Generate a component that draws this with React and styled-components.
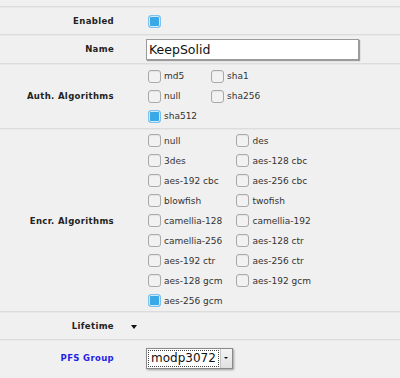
import React from "react";
import styled, { createGlobalStyle } from "styled-components";

const Global = createGlobalStyle`
  html, body { margin: 0; padding: 0; background: #f0f0f0; }
  body { font-family: "DejaVu Sans", Verdana, sans-serif; }
`;

const Page = styled.div`
  width: 400px;
  height: 378px;
  overflow: hidden;
  background: #f0f0f0;
`;

const TopSpacer = styled.div`
  height: 6px;
`;

const Row = styled.div`
  display: grid;
  grid-template-columns: 114px 32px 1fr;
  align-items: center;
  border-top: 1px solid #dcdcdc;
  box-shadow: inset 0 1px 0 #e8e8e8;
  min-height: ${(p) => p.$h || 27}px;
  box-sizing: content-box;
  padding: ${(p) => p.$pad || "0"};
`;

const Label = styled.div`
  text-align: right;
  font-weight: bold;
  font-size: 8.5px;
  color: ${(p) => (p.$link ? "#1f1fe6" : "#222")};
  letter-spacing: 0.35px;
`;

const Gap = styled.div`
  display: flex;
  align-items: center;
  padding-left: 17px;
  padding-top: ${(p) => (p.$down ? "2px" : "0")};
`;

const Value = styled.div`
  display: flex;
  align-items: center;
`;

const CheckGrid = styled.div`
  display: grid;
  grid-template-columns: auto auto;
  justify-content: start;
  column-gap: 14px;
  row-gap: 7px;
  padding-left: 2px;
`;

const CheckItem = styled.label`
  display: flex;
  align-items: center;
  height: 13px;
  font-size: 9px;
  color: #333;
  white-space: nowrap;
`;

const Box = styled.span`
  box-sizing: border-box;
  width: 13px;
  height: 13px;
  border-radius: 3px;
  margin-right: 3px;
  flex: none;
  border: 1px solid ${(p) => (p.$on ? "#7cc2ee" : "#a9a9a9")};
  background: ${(p) => (p.$on ? "#3aa8e6" : "#f2f2f2")};
  box-shadow: ${(p) =>
    p.$on ? "inset 0 0 0 1px #cfe9f9" : "inset 0 1px 1px rgba(0,0,0,0.06)"};
`;

const SingleBox = styled(Box)`
  margin-left: 2px;
  margin-top: 1px;
`;

const TextInput = styled.div`
  box-sizing: border-box;
  width: 213px;
  height: 21px;
  background: #fff;
  border: 1px solid #9a9a9a;
  box-shadow: 1px 1px 1px rgba(0, 0, 0, 0.35);
  font-size: 12.5px;
  line-height: 19px;
  padding-left: 2px;
  color: #111;
`;

const SelectBox = styled.div`
  box-sizing: border-box;
  display: flex;
  height: 21px;
  border: 1px solid #8a8a8a;
  box-shadow: 1px 1px 2px rgba(0, 0, 0, 0.35);
  background: #fff;
`;

const SelectValue = styled.div`
  font-size: 12px;
  line-height: 17px;
  color: #111;
  padding: 0 3px;
  margin: 1px;
  outline: 1px dotted #444;
  outline-offset: -1px;
`;

const SelectButton = styled.div`
  width: 11px;
  display: flex;
  align-items: center;
  justify-content: center;
  background: linear-gradient(#f4f4f4, #e0e0e0);
  border-left: 1px solid #c4c4c4;
`;

const Tri = styled.span`
  width: 0;
  height: 0;
  border-left: ${(p) => p.$s}px solid transparent;
  border-right: ${(p) => p.$s}px solid transparent;
  border-top: ${(p) => Math.round(p.$s * 1.1)}px solid #111;
`;

const auth = [
  ["md5", false],
  ["sha1", false],
  ["null", false],
  ["sha256", false],
  ["sha512", true],
];

const encr = [
  ["null", false],
  ["des", false],
  ["3des", false],
  ["aes-128 cbc", false],
  ["aes-192 cbc", false],
  ["aes-256 cbc", false],
  ["blowfish", false],
  ["twofish", false],
  ["camellia-128", false],
  ["camellia-192", false],
  ["camellia-256", false],
  ["aes-128 ctr", false],
  ["aes-192 ctr", false],
  ["aes-256 ctr", false],
  ["aes-128 gcm", false],
  ["aes-192 gcm", false],
  ["aes-256 gcm", true],
];

function Checks({ items }) {
  return (
    <CheckGrid>
      {items.map(([name, on]) => (
        <CheckItem key={name}>
          <Box $on={on} />
          {name}
        </CheckItem>
      ))}
    </CheckGrid>
  );
}

export default function App() {
  return (
    <Page>
      <Global />
      <TopSpacer />
      <Row $h={27}>
        <Label>Enabled</Label>
        <Gap />
        <Value>
          <SingleBox $on />
        </Value>
      </Row>
      <Row $h={28}>
        <Label>Name</Label>
        <Gap />
        <Value>
          <TextInput>KeepSolid</TextInput>
        </Value>
      </Row>
      <Row $h={54} $pad="5px 0 5px">
        <Label>Auth. Algorithms</Label>
        <Gap />
        <Value>
          <Checks items={auth} />
        </Value>
      </Row>
      <Row $h={173} $pad="5px 0 4px">
        <Label>Encr. Algorithms</Label>
        <Gap />
        <Value>
          <Checks items={encr} />
        </Value>
      </Row>
      <Row $h={27}>
        <Label>Lifetime</Label>
        <Gap $down>
          <Tri $s={3.5} />
        </Gap>
        <Value />
      </Row>
      <Row $h={30} $pad="3px 0 0">
        <Label $link>PFS Group</Label>
        <Gap />
        <Value>
          <SelectBox>
            <SelectValue>modp3072</SelectValue>
            <SelectButton>
              <Tri $s={2} />
            </SelectButton>
          </SelectBox>
        </Value>
      </Row>
    </Page>
  );
}
